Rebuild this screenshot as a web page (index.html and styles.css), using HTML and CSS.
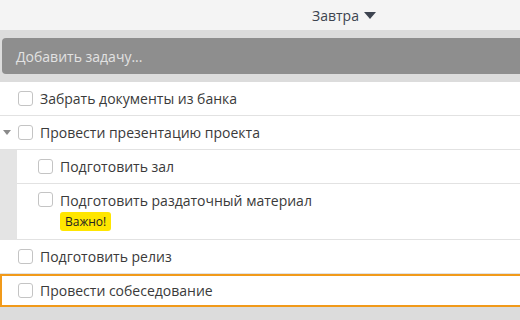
FILE: index.html
```html
<!DOCTYPE html>
<html lang="ru">
<head>
<meta charset="utf-8">
<link rel="stylesheet" href="styles.css">
</head>
<body>
<div class="app">
  <header class="topbar">
    <span class="day">Завтра <span class="day-caret"></span></span>
  </header>
  <div class="add-band">
    <div class="add-input">Добавить задачу...</div>
  </div>
  <ul class="tasks">
    <li class="task"><span class="box"></span><span class="label">Забрать документы из банка</span></li>
    <li class="task parent"><span class="toggle"></span><span class="box"></span><span class="label">Провести презентацию проекта</span></li>
    <li class="subgroup">
      <ul class="subtasks">
        <li class="task sub"><span class="box"></span><span class="label">Подготовить зал</span></li>
        <li class="task sub tall">
          <span class="box"></span>
          <div class="body">
            <span class="label">Подготовить раздаточный материал</span>
            <span class="badge">Важно!</span>
          </div>
        </li>
      </ul>
    </li>
    <li class="task"><span class="box"></span><span class="label">Подготовить релиз</span></li>
    <li class="task active"><span class="box"></span><span class="label">Провести собеседование</span></li>
  </ul>
</div>
</body>
</html>
```
FILE: styles.css
```css
* { box-sizing: border-box; }
html, body { margin: 0; padding: 0; }
body {
  width: 520px;
  height: 320px;
  overflow: hidden;
  background: #dcdcdc;
  font-family: "Open Sans", "Noto Sans", sans-serif;
  font-size: 14px;
  color: #3a3a3a;
}
.topbar {
  height: 30px;
  background: #f4f4f4;
  display: flex;
  align-items: center;
  justify-content: flex-start;
  padding-left: 312px;
}
.day { color: #3d4450; display: flex; align-items: center; gap: 5px; }
.day-caret {
  width: 0; height: 0;
  border-left: 6px solid transparent;
  border-right: 6px solid transparent;
  border-top: 7px solid #3d4450;
}
.add-band {
  background: #dcdcdc;
  padding: 8px 0 8px 2px;
  height: 52px;
}
.add-input {
  height: 36px;
  background: #8e8e8e;
  border-radius: 4px 0 0 4px;
  color: #e2e2e2;
  display: flex;
  align-items: center;
  padding-left: 14px;
}
.tasks, .subtasks { list-style: none; margin: 0; padding: 0; background: #fff; }
.task {
  display: flex;
  align-items: center;
  height: 34px;
  border-bottom: 1px solid #e2e2e2;
  padding-left: 18px;
  position: relative;
}
.box {
  width: 15px; height: 15px;
  border: 1px solid #c4c4c4;
  border-radius: 3px;
  background: #fff;
  flex: none;
  margin-right: 7px;
}
.toggle {
  position: absolute;
  left: 3px;
  top: 14px;
  width: 0; height: 0;
  border-left: 4px solid transparent;
  border-right: 4px solid transparent;
  border-top: 5px solid #8a8a8a;
}
.subgroup { background: #e4e4e4; padding-left: 17px; }
.task.sub { background: #fff; padding-left: 21px; }
.task.tall { height: 56px; align-items: flex-start; padding-top: 7px; }
.task.tall .box { margin-top: 1px; }
.body { display: flex; flex-direction: column; align-items: flex-start; gap: 2px; }
.badge {
  background: #ffe600;
  color: #222;
  font-size: 12px;
  border-radius: 3px;
  padding: 1px 5px;
  line-height: 17px;
}
.task.active {
  border: 2px solid #f19a1a;
  height: 33px;
  padding-left: 16px;
  margin-right: -4px;
}
```
